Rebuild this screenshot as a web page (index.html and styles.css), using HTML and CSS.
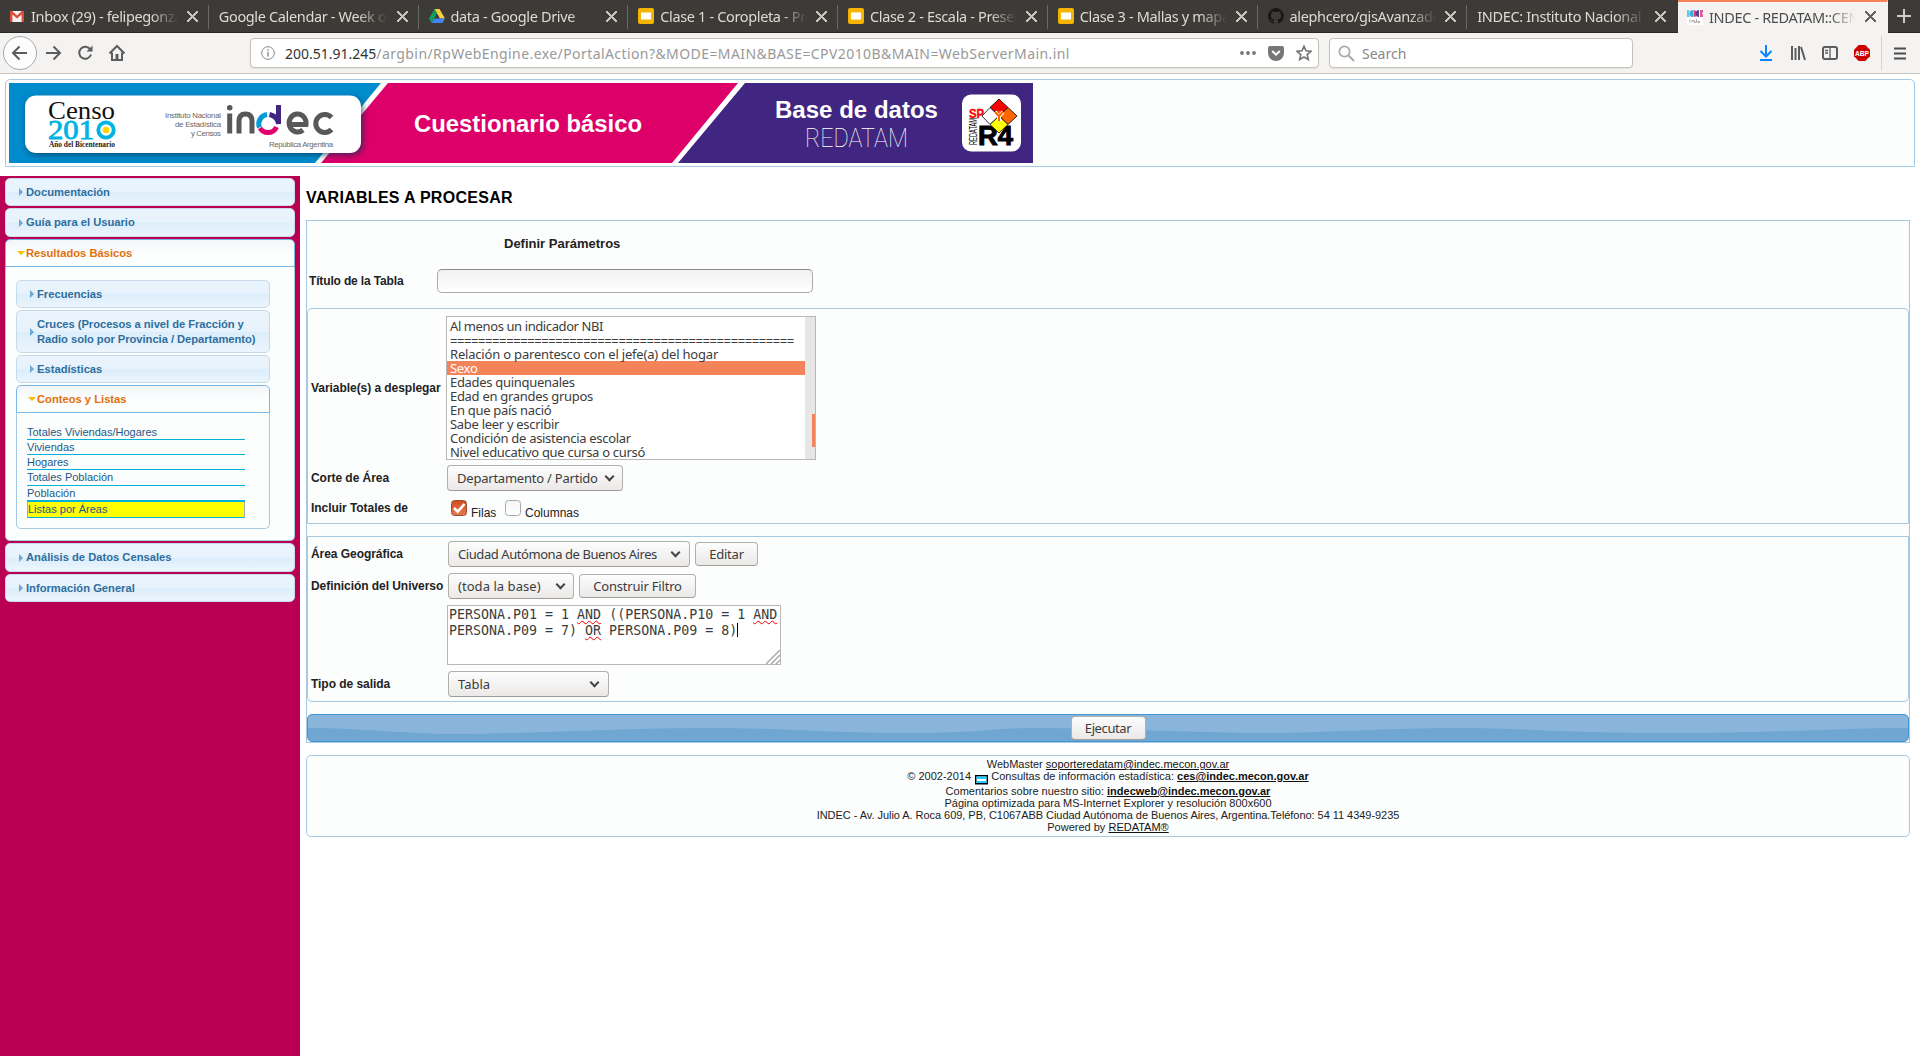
FILE: index.html
```html
<!DOCTYPE html>
<html lang="es">
<head>
<meta charset="utf-8">
<title>INDEC - REDATAM::CENSO 2010</title>
<link rel="stylesheet" href="styles.css">
</head>
<body>
<div class="tabs">
  <div class="tab"><svg class="fav" viewBox="0 0 16 16"><rect x="1" y="3" width="14" height="11" fill="#f2f2f2"/><path d="M1 3h2.200L8 7.500 12.800 3H15v11h-2.400V6.500L8 10.500 3.400 6.500V14H1z" fill="#dd4b39"/></svg><span class="tt">Inbox (29) - felipegonzalez</span><i class="x"></i></div>
  <div class="tab"><span class="tt">Google Calendar - Week of</span><i class="x"></i></div>
  <div class="tab"><svg class="fav" viewBox="0 0 16 16"><path d="M5.500 1h5L16 10.500h-5z" fill="#ffcd40"/><path d="M5.500 1L8 5.500 2.600 15 0 10.500z" fill="#0f9d58"/><path d="M5.200 10.500H16L13.400 15H2.600z" fill="#4285f4"/></svg><span class="tt">data - Google Drive</span><i class="x"></i></div>
  <div class="tab"><svg class="fav" viewBox="0 0 16 16"><rect width="16" height="16" rx="2" fill="#f5b400"/><rect x="3" y="4.500" width="10" height="7" fill="#fff"/></svg><span class="tt">Clase 1 - Coropleta - Presentación</span><i class="x"></i></div>
  <div class="tab"><svg class="fav" viewBox="0 0 16 16"><rect width="16" height="16" rx="2" fill="#f5b400"/><rect x="3" y="4.500" width="10" height="7" fill="#fff"/></svg><span class="tt">Clase 2 - Escala - Presentación</span><i class="x"></i></div>
  <div class="tab"><svg class="fav" viewBox="0 0 16 16"><rect width="16" height="16" rx="2" fill="#f5b400"/><rect x="3" y="4.500" width="10" height="7" fill="#fff"/></svg><span class="tt">Clase 3 - Mallas y mapas en</span><i class="x"></i></div>
  <div class="tab"><svg class="fav" viewBox="0 0 16 16"><path d="M8 0a8 8 0 0 0-2.500 15.600c.4.100.5-.2.500-.4v-1.500c-2.200.5-2.700-.9-2.700-.9-.4-.9-.9-1.200-.9-1.200-.7-.5.100-.5.100-.5.800.1 1.200.8 1.200.8.700 1.200 1.900.9 2.300.7.100-.5.300-.9.500-1.100-1.800-.2-3.600-.9-3.600-4 0-.9.300-1.600.8-2.100-.1-.2-.4-1 .1-2.100 0 0 .7-.2 2.200.8a7.500 7.500 0 0 1 4 0c1.500-1 2.200-.8 2.200-.8.400 1.100.2 1.900.1 2.100.5.600.8 1.300.8 2.100 0 3.100-1.900 3.700-3.700 3.900.3.300.6.800.6 1.500v2.200c0 .2.100.5.600.4A8 8 0 0 0 8 0z" fill="#191717"/></svg><span class="tt">alephcero/gisAvanzado</span><i class="x"></i></div>
  <div class="tab"><span class="tt">INDEC: Instituto Nacional de</span><i class="x"></i></div>
  <div class="tab active"><svg class="fav" viewBox="0 0 16 16"><rect width="16" height="16" fill="#fff"/><path d="M0 1h2.500v7H0z" fill="#6cc5e4"/><path d="M6 1v7a3.500 3.500 0 0 1 0-7z" fill="#35aee0"/><path d="M6.500 1a3.500 3.500 0 0 1 0 7z" fill="#d8437c"/><path d="M12 1v7a3.500 3.500 0 0 1 0-7z" fill="#5a3f8e"/><path d="M13 1h3v2l-1 1.500 1 1.500v2h-3z" fill="#e2558d"/><path d="M3 10.500v3M5 13.500v-2h2v2M9.500 10v3.500h-2v-2M11 12.500h2M11 11.500v2h2" fill="none" stroke="#999" stroke-width=".8"/></svg><span class="tt">INDEC - REDATAM::CENSO</span><i class="x"></i></div>
  <div class="newtab"></div>
</div>
<div class="nav">
  <div class="back"><svg width="18" height="18" viewBox="0 0 18 18"><path d="M16 9H2.500M8.500 2.500L2 9l6.500 6.500" class="ln"/></svg></div>
  <svg class="n1" width="18" height="18" viewBox="0 0 18 18"><path d="M2 9h13.500M9.500 2.500L16 9l-6.500 6.500" class="ln"/></svg>
  <svg class="n2" width="18" height="18" viewBox="0 0 18 18"><path d="M14.300 5.500A6 6 0 1 0 15 10.500" class="ln"/><path d="M16.500 1.500v6h-6z" fill="#5c5c5c"/></svg>
  <svg class="n3" width="18" height="18" viewBox="0 0 18 18"><path d="M1.500 9.500L9 2l7.500 7.500M4 8.500V16h10V8.500" class="ln"/><rect x="7.500" y="10" width="3" height="6" fill="#5c5c5c"/></svg>
  <div class="url"><svg width="14" height="14" viewBox="0 0 14 14"><circle cx="7" cy="7" r="6.300" fill="none" stroke="#888"/><path d="M7 6v4.500M7 3.200v1.600" stroke="#888" stroke-width="1.400"/></svg><span class="addr"><b>200.51.91.245</b>/argbin/RpWebEngine.exe/PortalAction?&amp;MODE=MAIN&amp;BASE=CPV2010B&amp;MAIN=WebServerMain.inl</span>
    <span class="acts"><svg width="16" height="4" viewBox="0 0 16 4"><circle cx="2" cy="2" r="1.900"/><circle cx="8" cy="2" r="1.900"/><circle cx="14" cy="2" r="1.900"/></svg><svg width="16" height="15" viewBox="0 0 16 15"><path d="M2 0h12a2 2 0 0 1 2 2v5a8 8 0 0 1-16 0V2a2 2 0 0 1 2-2z"/><path d="M4.200 5L8 8.700 11.800 5" fill="none" stroke="#fff" stroke-width="2"/></svg><svg width="16" height="16" viewBox="0 0 16 16"><path d="M8 1.300l2 4.500 4.900.5-3.700 3.300 1.100 4.900L8 12l-4.300 2.500 1.100-4.900L1.100 6.300 6 5.800z" fill="none" stroke="#777" stroke-width="1.700"/></svg></span></div>
  <div class="search"><svg width="17" height="17" viewBox="0 0 17 17"><circle cx="6.500" cy="6.500" r="5.200" fill="none" stroke="#aaa" stroke-width="1.700"/><path d="M10.300 10.300L16 16" stroke="#aaa" stroke-width="2"/></svg><span>Search</span></div>
  <div class="tools">
    <svg width="16" height="16" viewBox="0 0 16 16"><path d="M8 0v11M2.500 6l5.500 5.500L13.500 6M2 15h12" fill="none" stroke="#0a84ff" stroke-width="2"/></svg>
    <svg width="16" height="16" viewBox="0 0 16 16"><path d="M2 1v14M5.500 3v12M9 1v14M11 2l4 13" class="ln"/></svg>
    <svg width="16" height="16" viewBox="0 0 16 16"><rect x="1" y="2" width="14" height="12" rx="2" class="ln"/><path d="M8 2v12M3 5.500h3M3 8h3" stroke="#5c5c5c" stroke-width="1.300"/></svg>
    <svg width="16" height="16" viewBox="0 0 16 16"><path d="M4.700 0h6.600L16 4.700v6.600L11.300 16H4.700L0 11.300V4.700z" fill="#c00"/><text x="1" y="10.900" textLength="14" lengthAdjust="spacingAndGlyphs" class="abp">ABP</text></svg>
    <svg width="12" height="13" viewBox="0 0 12 13" class="menu"><path d="M0 1.500h12M0 6.500h12M0 11.500h12" stroke="#4c4c4c" stroke-width="2"/></svg>
  </div>
</div>
<div class="header">
<svg class="banner" width="1024" height="80" viewBox="9 83 1024 80">
  <defs><filter id="sh" x="-10%" y="-20%" width="120%" height="150%"><feGaussianBlur stdDeviation="3"/></filter></defs>
  <rect x="9" y="83" width="1024" height="80" fill="#fff"/>
  <path d="M9 83H381L315 163H9z" fill="#008ccc"/>
  <path d="M388 83H738L672 163H321z" fill="#dd0069"/>
  <path d="M745 83H1033V163H678z" fill="#402680"/>
  <rect x="26" y="98" width="337" height="57" rx="11" fill="#003355" opacity=".7" filter="url(#sh)"/>
  <rect x="25" y="95.500" width="336" height="57.500" rx="11" fill="#fff"/>
  <g class="serif"><text x="48" y="119" font-size="26" textLength="67" lengthAdjust="spacingAndGlyphs" fill="#111">Censo</text>
  <text x="48" y="139" font-size="27" textLength="46" lengthAdjust="spacingAndGlyphs" fill="#00b3e3" stroke="#00b3e3" stroke-width=".8">201</text>
  <text x="49" y="146.500" font-size="8" font-weight="bold" textLength="66" lengthAdjust="spacingAndGlyphs" fill="#222">Año del Bicentenario</text></g>
  <circle cx="106" cy="130" r="7.700" fill="none" stroke="#00b3e3" stroke-width="3.800"/><circle cx="106" cy="130" r="3.300" fill="#ffd500"/>
  <g class="sans" fill="#666" font-size="7.800" text-anchor="end"><text x="221" y="117.500" textLength="56">Instituto Nacional</text><text x="221" y="126.500" textLength="46">de Estadística</text><text x="221" y="135.500" textLength="30">y Censos</text><text x="333" y="146.500" textLength="64">República Argentina</text></g>
  <g fill="none" stroke="#58585a" stroke-width="5"><path d="M229.700 113.500v20M239 133.500V121q0-7 6.500-7t6.500 7v12.500"/><path d="M287.500 124.500h18.500a8.500 9 0 1 0-3 5.500M331.500 117.500a9 9 0 1 0 0 12"/></g>
  <circle cx="229.700" cy="107.700" r="2.800" fill="#58585a"/>
  <g fill="none" stroke-width="5"><path d="M267 114.500a9.500 9.500 0 0 0-7.500 13" stroke="#009bd8"/><path d="M260 128a9.300 9.300 0 0 0 16.500-1" stroke="#e2006f"/><path d="M278.500 105v19q-1-8-9-9.500" stroke="#402680"/></g>
  <g class="sans" fill="#fff"><text x="414" y="131.500" font-size="24.500" font-weight="bold" textLength="228" lengthAdjust="spacingAndGlyphs">Cuestionario básico</text><text x="775" y="117.500" font-size="23.500" font-weight="bold" textLength="163" lengthAdjust="spacingAndGlyphs">Base de datos</text></g>
  <text x="805" y="147" font-size="25" class="thin" textLength="103" lengthAdjust="spacingAndGlyphs">REDATAM</text>
  <rect x="962" y="94.500" width="59" height="57" rx="9" fill="#fff"/>
  <g class="sans"><text x="969" y="118" font-size="13.500" font-weight="bold" fill="#f00" textLength="15" lengthAdjust="spacingAndGlyphs" stroke="#f00" stroke-width=".4">SP</text><text x="978" y="144.500" font-size="28" font-weight="bold" textLength="35" lengthAdjust="spacingAndGlyphs" stroke="#000" stroke-width="1">R4</text><text transform="translate(976.500 145) rotate(-90)" font-size="10" textLength="27" lengthAdjust="spacingAndGlyphs">REDATAM</text></g>
  <g stroke="#000" stroke-width=".8"><path d="M999 99l9 8.500-9 8.500-9-8.500z" fill="#f00"/><path d="M1008 107.500l9 8.500-9 8.500-9-8.500z" fill="#f60"/><path d="M990 107.500l9 8.500-9 8.500-8-8.500z" fill="#fff"/><path d="M999 116l9 8.500-9 8.500-9-8.500z" fill="#ff0"/></g>
  <path d="M995 112l4 4 4-4M999 115v6" fill="none" stroke="#fff" stroke-width="4"/><path d="M995 112l4 4 4-4M999 115v6" fill="none" stroke="#f60" stroke-width="2"/><circle cx="999" cy="112" r="1.500" fill="#f60"/>
</svg>
</div>
<div class="page">
  <div class="side">
    <div class="acc a1">Documentación</div>
    <div class="acc a2">Guía para el Usuario</div>
    <div class="acc open a1">Resultados Básicos</div>
    <div class="panel">
      <div class="acc in">Frecuencias</div>
      <div class="acc in two">Cruces (Procesos a nivel de Fracción y<br>Radio solo por Provincia / Departamento)</div>
      <div class="acc in">Estadísticas</div>
      <div class="acc in open">Conteos y Listas</div>
      <div class="links"><a>Totales Viviendas/Hogares</a><a>Viviendas</a><a>Hogares</a><a class="t">Totales Población</a><a>Población</a><a class="hot">Listas por Áreas</a></div>
    </div>
    <div class="acc a2">Análisis de Datos Censales</div>
    <div class="acc a1">Información General</div>
  </div>
  <div class="main">
    <h1>VARIABLES A PROCESAR</h1>
    <div class="form">
      <div class="def">Definir Parámetros</div>
      <div class="titulo"><label>Título de la Tabla</label><div class="inp"></div></div>
      <div class="fs f1">
        <div class="row r1"><label>Variable(s) a desplegar</label>
          <div class="list"><div class="opts"><div class="nar">Al menos un indicador NBI</div><div class="eq">=================================================</div><div class="wide">Relación o parentesco con el jefe(a) del hogar</div><div class="sel">Sexo</div><div>Edades quinquenales</div><div>Edad en grandes grupos</div><div>En que país nació</div><div>Sabe leer y escribir</div><div>Condición de asistencia escolar</div><div>Nivel educativo que cursa o cursó</div></div><div class="bar"><div class="thumb"></div></div></div></div>
        <div class="row r2"><label>Corte de Área</label><div class="drop d1"><span>Departamento / Partido</span><i></i></div></div>
        <div class="row r3"><label>Incluir Totales de</label><div class="cb on"><svg width="16" height="16" viewBox="0 0 16 16"><path d="M3 8l3.700 3.700L13.500 4" fill="none" stroke="#fff" stroke-width="2.600"/></svg></div><span class="ct c1">Filas</span><div class="cb"></div><span class="ct">Columnas</span></div>
      </div>
      <div class="fs f2">
        <div class="row q1"><label>Área Geográfica</label><div class="drop d2"><span>Ciudad Autómona de Buenos Aires</span><i></i></div><div class="btn b1"><span>Editar</span></div></div>
        <div class="row q2"><label>Definición del Universo</label><div class="drop d3"><span>(toda la base)</span><i></i></div><div class="btn b2"><span>Construir Filtro</span></div></div>
        <div class="row q3"><div class="ta">PERSONA.P01 = 1 <u>AND</u> ((PERSONA.P10 = 1 <u>AND</u><br>PERSONA.P09 = 7) <u>OR</u> PERSONA.P09 = 8)<b></b><svg width="14" height="14" viewBox="0 0 14 14"><path d="M0 14L14 0M5 14l9-9M10 14l4-4" stroke="#aaa" stroke-width="1.500"/></svg></div></div>
        <div class="row q4"><label>Tipo de salida</label><div class="drop d4"><span>Tabla</span><i></i></div></div>
      </div>
      <div class="exec"><svg class="wave" width="1602" height="26" viewBox="0 0 1602 26" preserveAspectRatio="none"><path d="M0 13C60 13 90 19 150 19S320 13 400 13 520 18 600 18 680 13 730 13 910 18 960 18 1080 13 1150 13s90 5 210 5 160-5 242-5V26H0z" fill="#6fa7d2"/></svg><div class="btn b3"><span>Ejecutar</span></div></div>
    </div>
    <div class="foot">
      <div>WebMaster <u>soporteredatam@indec.mecon.gov.ar</u></div>
      <div class="l2">© 2002-2014 <svg width="13" height="10" viewBox="0 0 13 10"><rect x=".75" y=".75" width="11.500" height="8" fill="#fff" stroke="#001" stroke-width="1.500"/><path d="M1.500 1.500h10v2.500h-10zM1.500 6h10v2h-10z" fill="#2cf"/></svg> Consultas de información estadística: <b><u>ces@indec.mecon.gov.ar</u></b></div>
      <div>Comentarios sobre nuestro sitio: <b><u>indecweb@indec.mecon.gov.ar</u></b></div>
      <div>Página optimizada para MS-Internet Explorer y resolución 800x600</div>
      <div class="dir">INDEC - Av. Julio A. Roca 609, PB, C1067ABB Ciudad Autónoma de Buenos Aires, Argentina.Teléfono: 54 11 4349-9235</div>
      <div>Powered by <u>REDATAM®</u></div>
    </div>
  </div>
</div>
</body>
</html>
```
FILE: styles.css
```css
* { box-sizing: border-box; }
body { margin: 0; height: 1056px; overflow: hidden; background: #fff; font-family: "Liberation Sans", Arial, sans-serif; display: flex; flex-direction: column; }
svg { flex: none; display: block; }
.ln { fill: none; stroke: #5c5c5c; stroke-width: 2; }

/* browser tabs */
.tabs { height: 33px; flex: none; display: flex; background: #3c3b37; border-bottom: 1px solid #262622; font: 14.500px "Noto Sans", sans-serif; color: #dfdbd2; }
.tab { width: 209.750px; flex: none; display: flex; align-items: center; padding: 0 11px 0 9px; border-right: 1px solid #3c3b37; background: linear-gradient(#6a6964, #6a6964) right 5px / 1px 24px no-repeat; }
.tab:nth-child(8) { background: none; }
.fav { width: 16px; height: 16px; margin-right: 6px; }
.tt { flex: 1; overflow: hidden; white-space: nowrap; letter-spacing: -.35px; margin-right: 6px; -webkit-mask-image: linear-gradient(90deg, #000 80%, transparent 98%); mask-image: linear-gradient(90deg, #000 80%, transparent 98%); }
.x { width: 11px; height: 11px; flex: none; opacity: .85; background: linear-gradient(45deg, transparent 45%, currentColor 45%, currentColor 55%, transparent 55%), linear-gradient(-45deg, transparent 45%, currentColor 45%, currentColor 55%, transparent 55%); }
.active { height: 33px; background: #f4f3f2; color: #4c4c4c; border-top: 2px solid #f38358; border-right-color: #f4f3f2; padding-bottom: 2px; }
.newtab { flex: 1; background: linear-gradient(#ccc, #ccc) center / 14px 2px no-repeat, linear-gradient(#ccc, #ccc) center / 2px 14px no-repeat; }

/* toolbar */
.nav { height: 41px; flex: none; display: flex; align-items: center; background: #f4f3f2; border-bottom: 1px solid #c6c3c0; padding-left: 3px; font: 14px "Noto Sans", sans-serif; }
.back { width: 34px; height: 34px; border: 1px solid #aaa; border-radius: 50%; background: #fcfcfc; display: flex; align-items: center; justify-content: center; }
.n1 { margin-left: 7px; } .n2 { margin-left: 14px; } .n3 { margin-left: 14px; }
.url, .search { height: 30px; background: #fff; border: 1px solid #c5c1bd; border-radius: 4px; display: flex; align-items: center; box-shadow: 0 1px 1px #0001; }
.url { width: 1069px; margin-left: 124px; padding: 0 6px 0 10px; }
.addr { margin-left: 10px; color: #999; flex: 1; white-space: nowrap; letter-spacing: .42px; }
.addr b { color: #333; font-weight: normal; letter-spacing: 0; }
.acts { display: flex; gap: 12px; align-items: center; fill: #777; }
.search { width: 304px; margin-left: 10px; padding-left: 8px; color: #888; }
.search span { margin-left: 7px; }
.tools { display: flex; align-items: center; margin-left: 125px; gap: 16px; flex: 1; height: 34px; background: linear-gradient(#d6d4d2, #d6d4d2) 123px 0 / 1px 34px no-repeat; }
.menu { margin-left: 8px; }
.abp { font: bold 7.500px "Liberation Sans", sans-serif; fill: #fff; }

/* banner */
.header { height: 88px; flex: none; margin: 5px 5px 9px; border: 1px solid #a6c9e2; border-radius: 5px 5px 0 0; padding: 3px; background: #fcfdfd; }
.serif { font-family: "Liberation Serif", serif; }
.sans { font-family: "Liberation Sans", sans-serif; }
.thin { font-family: Roboto, "Open Sans", sans-serif; font-weight: 100; fill: #fff; }

/* sidebar */
.page { flex: 1; display: flex; }
.side { width: 300px; flex: none; background: #b90053; padding: 2px 5px; }
.acc { height: 28px; margin-bottom: 2px; border: 1px solid #c5dbec; border-radius: 5px; background: linear-gradient(#ebf4fc 0, #e6f2fc 50%, #dcedfb 51%, #ebf5fd 100%); color: #2e6e9e; font-weight: bold; font-size: 11.200px; line-height: 15px; display: flex; align-items: center; }
.acc::before { content: ""; width: 0; flex: none; border: 4px solid transparent; border-left-color: #6da8d5; border-right: 0; margin: 0 3px 0 13px; }
.a1 { height: 28px; margin-bottom: 2px; } .a2 { height: 29px; }
.acc.open { margin-bottom: 0; border-color: #79b7e7; border-radius: 5px 5px 0 0; color: #e17009; background: linear-gradient(#f3f6f8, #fdfefe 60%); }
.acc.open::before { border: 4px solid transparent; border-top-color: #f9bd01; border-bottom: 0; margin: 0 1px 0 11px; }
.panel { height: 274px; margin-bottom: 2px; background: #fcfdfd; border: 1px solid #a6c9e2; border-top: 0; border-radius: 0 0 5px 5px; padding: 13px 24px 0 10px; }
.two { height: 43px; letter-spacing: -.04px; white-space: nowrap; }
.links { height: 116px; border: 1px solid #a6c9e2; border-top: 0; border-radius: 0 0 5px 5px; padding: 12px 24px 0 10px; display: flex; flex-direction: column; }
.links a { flex: none; height: 15px; border-bottom: 1px solid #00b3d7; font-size: 11px; color: #1d5987; padding-top: 1px; line-height: 13px; }
.links a.t { height: 16px; }
.links a.hot { height: 17px; background: #ff0; border: 1px solid #aaa; border-top-color: #00b3d7; border-bottom-color: #00b3d7; }

/* form */
.main { width: 1604px; margin-left: 6px; }
h1 { margin: 0; height: 44px; padding-top: 13px; font-size: 16px; line-height: 18px; letter-spacing: .28px; color: #000; }
.form { height: 523px; border: 1px solid #a6c9e2; background: #fcfdfd; color: #222; font-size: 12px; }
.def { padding: 14px 0 0 197px; height: 48px; font-weight: bold; font-size: 13px; line-height: 18px; }
label { font-weight: bold; letter-spacing: -.05px; white-space: nowrap; flex: none; }
.titulo { height: 39px; display: flex; }
.titulo label { width: 130px; padding-left: 2px; line-height: 24px; letter-spacing: -.15px; }
.inp { width: 376px; height: 24px; border: 1px solid #aaa; border-top-color: #8a8a8a; border-radius: 5px; background: linear-gradient(#f1f1f1, #fff); }
.fs { border: 1px solid #a6c9e2; }
.f1 { height: 216px; border-radius: 5px 5px 0 0; padding-top: 7px; }
.f2 { height: 166px; margin-top: 12px; border-radius: 0 0 5px 5px; padding-top: 4px; }
.row { display: flex; align-items: center; padding-left: 3px; font-size: 12px; }
.row label { width: 137px; }
.r1 { height: 144px; } .row.r1 label { width: 135px; }
.list { width: 370px; height: 144px; border: 1px solid #bbb6b2; background: #fff; display: flex; overflow: hidden; font: 13px "Noto Sans", sans-serif; color: #3c3c3c; }
.opts { width: 358px; padding-top: 2px; }
.opts div { height: 14px; line-height: 14px; padding-left: 3px; white-space: nowrap; letter-spacing: -.3px; }
.opts .eq { letter-spacing: -.42px; position: relative; top: 1px; }
.opts .wide { letter-spacing: -.19px; }
.opts .nar { letter-spacing: -.4px; }
.opts .sel { background: #f38358; color: #fff; }
.bar { flex: 1; background: #e6e6e6; padding: 97px 0 0 7px; }
.thumb { width: 3px; height: 33px; background: #f38358; }
.r2 { height: 36px; }
.r3 { height: 24px; }
.row.r3 label { width: 140px; }
.cb { width: 16px; height: 16px; border: 1px solid #aaa; border-radius: 3.500px; background: linear-gradient(#f5f5f5, #fff); }
.cb.on { background: linear-gradient(#cf4f24, #e4784e); border-color: #9c4a2c; }
.cb svg { margin: -1px; }
.ct { padding-top: 10px; margin-left: 4px; }
.c1 { width: 34px; }
.drop, .btn { font: 13px "Noto Sans", sans-serif; color: #3c3c3c; border: 1px solid #b3afab; border-bottom-color: #a09c98; border-radius: 4px; background: linear-gradient(#fdfdfd, #ebe9e8); display: flex; align-items: center; white-space: nowrap; }
.drop { height: 26px; padding: 0 9px; justify-content: space-between; }
.drop i { width: 7px; height: 7px; border: solid #444; border-width: 0 2px 2px 0; transform: translateY(-2px) rotate(45deg); }
.btn { height: 24px; justify-content: center; margin-left: 5px; letter-spacing: -.2px; }
.d1 { width: 176px; margin-left: -1px; letter-spacing: -.22px; } .d2 { width: 242px; letter-spacing: -.43px; } .d3 { width: 126px; letter-spacing: .05px; } .d4 { width: 161px; }
.d2 i, .d4 i { margin-right: 1px; }
.b1 { width: 63px; } .b2 { width: 117px; } .b3 { width: 75px; margin: 0; position: relative; letter-spacing: -.4px; }
.q1 { height: 26px; } .q2 { height: 26px; margin-top: 6px; } .q3 { height: 60px; margin-top: 6px; padding-left: 139px; } .q4 { height: 26px; margin-top: 6px; }
.ta { position: relative; width: 334px; height: 60px; background: #fff; border: 1px solid #bbb6b2; padding: 1px; font: 13.300px/16px "DejaVu Sans Mono", monospace; color: #3c3c3c; white-space: nowrap; }
.ta u { text-decoration: underline wavy #e00 1px; text-underline-offset: 1px; text-decoration-skip-ink: none; }
.ta b { display: inline-block; width: 1px; height: 14px; background: #000; vertical-align: -2px; }
.ta svg { position: absolute; right: 0; bottom: 0; }
.exec { position: relative; height: 28px; margin-top: 12px; border: 1px solid #4297d7; border-radius: 5px; background: #8ab5db; display: flex; align-items: center; justify-content: center; overflow: hidden; }
.wave { position: absolute; left: 0; top: 0; }
.foot { height: 82px; margin-top: 12px; border: 1px solid #a6c9e2; border-radius: 5px; background: #fcfdfd; font-size: 11px; line-height: 12px; text-align: center; color: #222; padding-top: 2px; }
.foot .l2 { height: 15px; }
.l2 svg { display: inline-block; vertical-align: -5px; margin: 0 0 0 1px; }
.foot .dir { letter-spacing: -.045px; }
.foot u { color: #111; }
```
